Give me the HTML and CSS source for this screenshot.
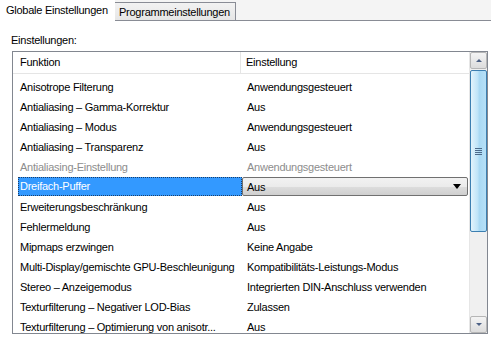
FILE: index.html
```html
<!DOCTYPE html>
<html>
<head>
<meta charset="utf-8">
<link rel="stylesheet" href="styles.css">
</head>
<body>
<div class="tabs">
  <div class="tab active">Globale Einstellungen</div>
  <div class="tab">Programmeinstellungen</div>
  <div class="tabfill"></div>
</div>
<div class="panel">
  <div class="label">Einstellungen:</div>
  <div class="listbox">
    <div class="content">
      <div class="header">
        <div class="hcell c1">Funktion</div>
        <div class="hcell c2">Einstellung</div>
      </div>
      <div class="rows">
        <div class="row"><div class="cell c1">Anisotrope Filterung</div><div class="cell c2">Anwendungsgesteuert</div></div>
        <div class="row"><div class="cell c1">Antialiasing – Gamma-Korrektur</div><div class="cell c2">Aus</div></div>
        <div class="row"><div class="cell c1">Antialiasing – Modus</div><div class="cell c2">Anwendungsgesteuert</div></div>
        <div class="row"><div class="cell c1">Antialiasing – Transparenz</div><div class="cell c2">Aus</div></div>
        <div class="row disabled"><div class="cell c1">Antialiasing-Einstellung</div><div class="cell c2">Anwendungsgesteuert</div></div>
        <div class="row selected"><div class="cell c1 sel">Dreifach-Puffer</div><div class="cell c2 combo-cell"><div class="combo"><span>Aus</span><span class="arrow"></span></div></div></div>
        <div class="row"><div class="cell c1">Erweiterungsbeschränkung</div><div class="cell c2">Aus</div></div>
        <div class="row"><div class="cell c1">Fehlermeldung</div><div class="cell c2">Aus</div></div>
        <div class="row"><div class="cell c1">Mipmaps erzwingen</div><div class="cell c2">Keine Angabe</div></div>
        <div class="row"><div class="cell c1">Multi-Display/gemischte GPU-Beschleunigung</div><div class="cell c2">Kompatibilitäts-Leistungs-Modus</div></div>
        <div class="row"><div class="cell c1">Stereo – Anzeigemodus</div><div class="cell c2">Integrierten DIN-Anschluss verwenden</div></div>
        <div class="row"><div class="cell c1">Texturfilterung – Negativer LOD-Bias</div><div class="cell c2">Zulassen</div></div>
        <div class="row"><div class="cell c1">Texturfilterung – Optimierung von anisotr...</div><div class="cell c2">Aus</div></div>
      </div>
    </div>
    <div class="scrollbar">
      <div class="sbtn up"><span class="tri-up"></span></div>
      <div class="track">
        <div class="thumb"><div class="grip"></div></div>
      </div>
      <div class="sbtn down"><span class="tri-down"></span></div>
    </div>
  </div>
</div>
</body>
</html>
```
FILE: styles.css
```css
html, body {
  margin: 0;
  padding: 0;
  background: #ffffff;
  width: 491px;
  height: 340px;
  overflow: hidden;
  font-family: "Liberation Sans", Arial, sans-serif;
  font-size: 11px;
  letter-spacing: -0.25px;
  color: #000;
}

.tabs {
  display: flex;
  height: 21px;
  background: #f4f4f4;
}

.tab {
  box-sizing: border-box;
  height: 19px;
  margin-top: 2px;
  padding: 3px 5px 0 4px;
  border: 1px solid #898c95;
  border-left: none;
  background: linear-gradient(#f2f2f2, #e6e6e6);
  white-space: nowrap;
}

.tab.active {
  height: 21px;
  margin-top: 0;
  width: 115px;
  padding: 4px 0 0 6px;
  background: #ffffff;
  border: none;
}

.tabfill {
  flex: 1;
  border-bottom: 1px solid #898c95;
}

.panel {
  padding: 12px 0 0 11px;
}

.label {
  height: 18px;
  line-height: 14px;
}

.listbox {
  display: flex;
  width: 476px;
  height: 283px;
  margin-left: 1px;
  border: 1px solid #828790;
  box-sizing: border-box;
}

.content {
  flex: 1;
  overflow: hidden;
}

.header {
  display: flex;
  height: 22px;
  border-bottom: 1px solid #e5e5e5;
  box-sizing: border-box;
}

.hcell {
  box-sizing: border-box;
  line-height: 20px;
}

.hcell.c1 {
  width: 228px;
  padding-left: 7px;
  border-right: 1px solid #e5e5e5;
}

.hcell.c2 {
  padding-left: 5px;
}

.rows {
  padding-top: 3px;
}

.row {
  display: flex;
  height: 20px;
  padding-left: 5px;
}

.cell {
  box-sizing: border-box;
  line-height: 20px;
  white-space: nowrap;
}

.cell.c1 {
  width: 224px;
  padding-left: 2px;
}

.cell.c2 {
  flex: 1;
  padding-left: 5px;
}

.row.disabled .cell {
  color: #8d8d8d;
}

.cell.sel {
  background: #3399ff;
  color: #ffffff;
  outline: 1px dotted #1a3f6b;
  outline-offset: -1px;
  line-height: 19px;
  height: 19px;
}

.cell.combo-cell {
  padding-left: 0;
}

.combo {
  box-sizing: border-box;
  height: 19px;
  margin-right: 1px;
  display: flex;
  align-items: center;
  justify-content: space-between;
  padding: 0 6px 0 4px;
  border: 1px solid #707070;
  border-radius: 2px;
  background: linear-gradient(#f2f2f2 0%, #ebebeb 50%, #dddddd 51%, #cfcfcf 100%);
}

.arrow {
  width: 0;
  height: 0;
  border-left: 4px solid transparent;
  border-right: 4px solid transparent;
  border-top: 5px solid #000;
}

.scrollbar {
  width: 17px;
  display: flex;
  flex-direction: column;
  background: #f0f0f0;
  border-left: 1px solid #e6e6e6;
}

.sbtn {
  box-sizing: border-box;
  height: 17px;
  border: 1px solid #b6b6b6;
  border-radius: 2px;
  background: linear-gradient(#f4f4f4, #dcdcdc);
  display: flex;
  align-items: center;
  justify-content: center;
}

.tri-up {
  width: 0;
  height: 0;
  border-left: 3px solid transparent;
  border-right: 3px solid transparent;
  border-bottom: 3px solid #4d6185;
}

.tri-down {
  width: 0;
  height: 0;
  border-left: 3px solid transparent;
  border-right: 3px solid transparent;
  border-top: 3px solid #4d6185;
}

.track {
  flex: 1;
  padding-top: 1px;
}

.thumb {
  box-sizing: border-box;
  height: 162px;
  border: 1px solid #3c7fb1;
  border-radius: 2px;
  background: linear-gradient(90deg, #e3f4fc 0%, #bfe4f8 45%, #a9d9f4 55%, #b6e0f7 100%);
  display: flex;
  align-items: center;
  justify-content: center;
}

.grip {
  width: 7px;
  height: 7px;
  background: repeating-linear-gradient(#4d6a8a 0 1px, transparent 1px 2px);
}
```
